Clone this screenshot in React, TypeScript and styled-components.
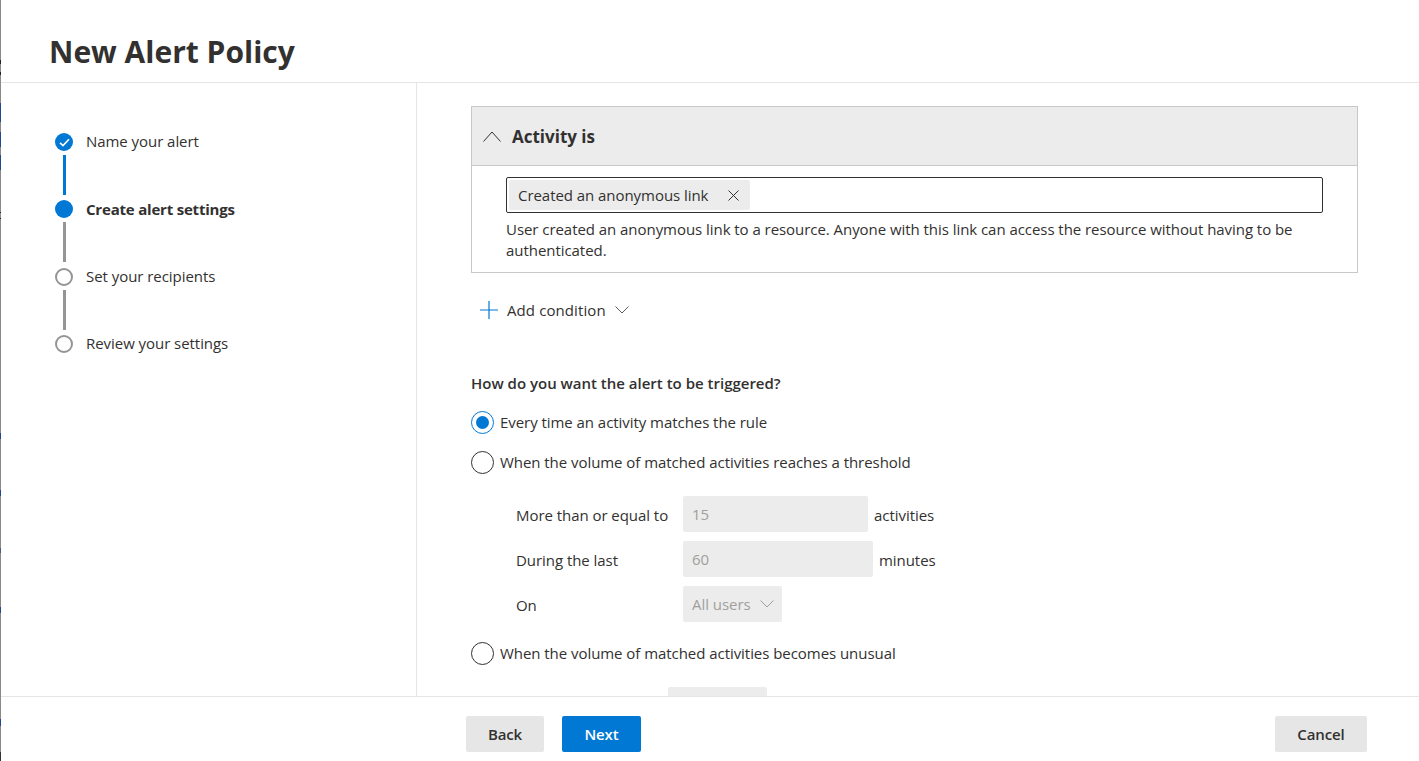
import React from "react";
import styled, { createGlobalStyle } from "styled-components";

const font = `"Open Sans", "Noto Sans", "Liberation Sans", sans-serif`;

const GlobalStyle = createGlobalStyle`
  html, body {
    margin: 0;
    height: 100%;
    background: #fff;
    overflow: hidden;
  }
  #root {
    height: 100%;
  }
  * {
    box-sizing: border-box;
  }
`;

const Page = styled.div`
  height: 761px;
  display: flex;
  font-family: ${font};
  font-size: 15px;
  letter-spacing: -0.05px;
  color: #323130;
`;

const EdgeStrip = styled.div`
  width: 1px;
  flex: none;
  background: linear-gradient(
    to bottom,
    #8a8a8a 0 60px,
    #222 60px 64px,
    #8a8a8a 64px 72px,
    #222 72px 75px,
    #8a8a8a 75px 103px,
    #24458f 103px 122px,
    #8a8a8a 122px 132px,
    #24458f 132px 147px,
    #8a8a8a 147px 155px,
    #24458f 155px 170px,
    #8a8a8a 170px 212px,
    #222 212px 213px,
    #8a8a8a 213px 218px,
    #222 218px 219px,
    #8a8a8a 219px 433px,
    #24458f 433px 439px,
    #8a8a8a 439px 490px,
    #24458f 490px 496px,
    #8a8a8a 496px 548px,
    #4a5a80 548px 553px,
    #8a8a8a 553px 607px,
    #24458f 607px 613px,
    #8a8a8a 613px 719px,
    #24458f 719px 726px,
    #8a8a8a 726px 752px,
    #333 752px 761px
  );
`;

const Dialog = styled.div`
  flex: 1;
  min-width: 0;
  display: flex;
  flex-direction: column;
`;

const Header = styled.header`
  height: 83px;
  flex: none;
  padding: 31px 0 0 48px;
  border-bottom: 1px solid #e6e6e6;
`;

const Title = styled.h1`
  margin: 0;
  font-size: 30px;
  line-height: 42px;
  font-weight: 700;
  letter-spacing: 0;
  color: #323130;
`;

const Body = styled.div`
  flex: 1;
  min-height: 0;
  display: flex;
`;

const Sidebar = styled.nav`
  width: 416px;
  flex: none;
  padding: 50px 0 0 54px;
  border-right: 1px solid #e6e6e6;
`;

const Step = styled.div`
  display: flex;
  gap: 13px;
  height: 67.4px;
`;

const Track = styled.div`
  width: 18px;
  flex: none;
  display: flex;
  flex-direction: column;
  align-items: center;
`;

const Dot = styled.span<{ $state: "done" | "active" | "todo" }>`
  width: 18px;
  height: 18px;
  flex: none;
  border-radius: 50%;
  display: flex;
  align-items: center;
  justify-content: center;
  background: ${(p) => (p.$state === "todo" ? "#fff" : "#0078d4")};
  border: ${(p) => (p.$state === "todo" ? "2.5px solid #979593" : "none")};
`;

const Connector = styled.span<{ $on: boolean }>`
  width: 3px;
  height: 40px;
  margin-top: 4px;
  background: ${(p) => (p.$on ? "#0078d4" : "#979593")};
`;

const StepLabel = styled.span<{ $bold?: boolean }>`
  margin-top: -0.7px;
  font-size: 15px;
  line-height: 19px;
  font-weight: ${(p) => (p.$bold ? 700 : 400)};
  letter-spacing: ${(p) => (p.$bold ? "-0.2px" : "-0.05px")};
`;

const Main = styled.main`
  flex: 1;
  min-width: 0;
  overflow: hidden;
  padding: 23px 61px 0 54px;
`;

const Panel = styled.section`
  border: 1px solid #c8c8c8;
  height: 167px;
`;

const PanelHead = styled.div`
  height: 59px;
  display: flex;
  align-items: center;
  gap: 11px;
  padding-left: 11px;
  background: #ececec;
  border-bottom: 1px solid #c8c8c8;
  font-size: 17px;
  font-weight: 700;
  letter-spacing: 0;
`;

const PanelBody = styled.div`
  padding: 11px 34px 0;
`;

const PickerBox = styled.div`
  height: 36px;
  display: flex;
  align-items: center;
  padding-left: 2px;
  border: 1px solid #323130;
  border-radius: 2px;
`;

const Chip = styled.div`
  height: 30px;
  width: 241px;
  display: flex;
  align-items: center;
  justify-content: space-between;
  padding: 0 11px 0 9px;
  background: #ececec;
  border-radius: 2px;
`;

const Hint = styled.p`
  margin: 6px 0 0;
  line-height: 21px;
`;

const AddRow = styled.div`
  display: flex;
  align-items: center;
  height: 20px;
  margin: 27px 0 0 9px;
  gap: 9px;
  letter-spacing: 0.1px;
`;

const Question = styled.h2`
  margin: 53px 0 0;
  font-size: 15px;
  line-height: 20px;
  font-weight: 600;
  letter-spacing: 0;
`;

const RadioRow = styled.label<{ $top: number }>`
  display: flex;
  align-items: center;
  gap: 6px;
  height: 24px;
  margin-top: ${(p) => p.$top}px;
`;

const RadioMark = styled.span<{ $checked?: boolean }>`
  width: 23px;
  height: 23px;
  flex: none;
  border-radius: 50%;
  display: flex;
  align-items: center;
  justify-content: center;
  border: 1px solid ${(p) => (p.$checked ? "#0078d4" : "#323130")};
  &::after {
    content: "";
    width: 13px;
    height: 13px;
    border-radius: 50%;
    background: ${(p) => (p.$checked ? "#0078d4" : "transparent")};
  }
`;

const Thresholds = styled.div`
  display: grid;
  grid-template-columns: 167px auto;
  grid-auto-rows: 36px;
  row-gap: 9px;
  margin: 22px 0 0 45px;
  align-items: center;
`;

const RowLabel = styled.span`
  line-height: 20px;
  padding-top: 1px;
`;

const FieldRow = styled.div`
  display: flex;
  align-items: center;
  gap: 6px;
`;

const Unit = styled.span`
  padding-top: 2px;
`;

const Disabled = styled.div<{ $w: number }>`
  width: ${(p) => p.$w}px;
  height: 36px;
  display: flex;
  align-items: center;
  padding: 0 9px;
  background: #ececec;
  border-radius: 2px;
  color: #a19f9d;
`;

const SelectBox = styled(Disabled)`
  justify-content: space-between;
  padding-right: 8px;
  height: 36px;
`;

const ClippedField = styled.div`
  width: 99px;
  height: 36px;
  margin: 22px 0 0 197px;
  background: #ececec;
  border-radius: 2px;
`;

const Footer = styled.footer`
  height: 65px;
  flex: none;
  display: flex;
  align-items: flex-start;
  gap: 18px;
  padding: 19px 52px 0 465px;
  border-top: 1px solid #e6e6e6;
  background: #fff;
`;

const Button = styled.button<{ $w: number; $primary?: boolean; $end?: boolean }>`
  width: ${(p) => p.$w}px;
  height: 36px;
  padding: 0;
  border: none;
  border-radius: 2px;
  font-family: ${font};
  font-size: 15px;
  font-weight: 600;
  letter-spacing: -0.1px;
  background: ${(p) => (p.$primary ? "#0078d4" : "#e6e6e6")};
  color: ${(p) => (p.$primary ? "#fff" : "#323130")};
  margin-left: ${(p) => (p.$end ? "auto" : "0")};
`;

const Line = styled.svg`
  flex: none;
  display: block;
  fill: none;
`;

const steps = [
  { label: "Name your alert", state: "done" as const },
  { label: "Create alert settings", state: "active" as const },
  { label: "Set your recipients", state: "todo" as const },
  { label: "Review your settings", state: "todo" as const },
];

function Chevron({ size, color, up }: { size: number; color: string; up?: boolean }) {
  const h = Math.round(size * 0.6);
  return (
    <Line width={size} height={h} viewBox={`0 0 ${size} ${h}`} stroke={color} strokeWidth="1">
      <path
        d={
          up
            ? `M0.5 ${h - 0.5} L${size / 2} 1 L${size - 0.5} ${h - 0.5}`
            : `M0.5 0.5 L${size / 2} ${h - 1} L${size - 0.5} 0.5`
        }
      />
    </Line>
  );
}

export default function App() {
  return (
    <Page>
      <GlobalStyle />
      <EdgeStrip />
      <Dialog>
        <Header>
          <Title>New Alert Policy</Title>
        </Header>
        <Body>
          <Sidebar>
            {steps.map((s, i) => (
              <Step key={s.label}>
                <Track>
                  <Dot $state={s.state}>
                    {s.state === "done" && (
                      <Line width="11" height="9" viewBox="0 0 11 9" stroke="#fff" strokeWidth="1.6">
                        <path d="M1 4.8 L4 7.6 L10 1.2" />
                      </Line>
                    )}
                  </Dot>
                  {i < steps.length - 1 && <Connector $on={s.state === "done"} />}
                </Track>
                <StepLabel $bold={s.state === "active"}>{s.label}</StepLabel>
              </Step>
            ))}
          </Sidebar>
          <Main>
            <Panel>
              <PanelHead>
                <Chevron size={18} color="#323130" up />
                Activity is
              </PanelHead>
              <PanelBody>
                <PickerBox>
                  <Chip>
                    Created an anonymous link
                    <Line width="11" height="11" viewBox="0 0 11 11" stroke="#323130" strokeWidth="1">
                      <path d="M0.5 0.5 L10.5 10.5 M10.5 0.5 L0.5 10.5" />
                    </Line>
                  </Chip>
                </PickerBox>
                <Hint>
                  User created an anonymous link to a resource. Anyone with this link can access the
                  resource without having to be authenticated.
                </Hint>
              </PanelBody>
            </Panel>
            <AddRow>
              <Line width="18" height="18" viewBox="0 0 18 18" stroke="#0078d4" strokeWidth="1.2">
                <path d="M9 0 V18 M0 9 H18" />
              </Line>
              Add condition
              <Chevron size={14} color="#605e5c" />
            </AddRow>
            <Question>How do you want the alert to be triggered?</Question>
            <RadioRow $top={17}>
              <RadioMark $checked />
              Every time an activity matches the rule
            </RadioRow>
            <RadioRow $top={16}>
              <RadioMark />
              When the volume of matched activities reaches a threshold
            </RadioRow>
            <Thresholds>
              <RowLabel>More than or equal to</RowLabel>
              <FieldRow>
                <Disabled $w={185}>15</Disabled>
                <Unit>activities</Unit>
              </FieldRow>
              <RowLabel>During the last</RowLabel>
              <FieldRow>
                <Disabled $w={190}>60</Disabled>
                <Unit>minutes</Unit>
              </FieldRow>
              <RowLabel>On</RowLabel>
              <FieldRow>
                <SelectBox $w={99}>
                  All users
                  <Chevron size={14} color="#a19f9d" />
                </SelectBox>
              </FieldRow>
            </Thresholds>
            <RadioRow $top={19}>
              <RadioMark />
              When the volume of matched activities becomes unusual
            </RadioRow>
            <ClippedField />
          </Main>
        </Body>
        <Footer>
          <Button $w={78}>Back</Button>
          <Button $w={79} $primary>
            Next
          </Button>
          <Button $w={92} $end>
            Cancel
          </Button>
        </Footer>
      </Dialog>
    </Page>
  );
}
